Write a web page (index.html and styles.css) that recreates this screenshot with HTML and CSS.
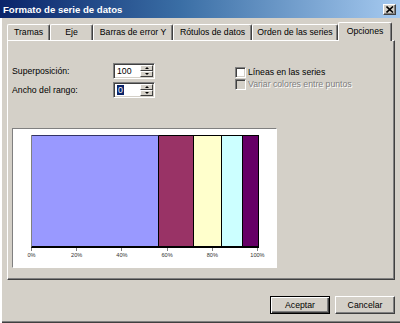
FILE: index.html
```html
<!DOCTYPE html>
<html lang="es">
<head>
<meta charset="utf-8">
<title>Formato de serie de datos</title>
<link rel="stylesheet" href="styles.css">
</head>
<body>
<div class="window">
  <div class="titlebar">
    <span class="title">Formato de serie de datos</span>
    <span class="close"><svg width="8" height="7" viewBox="0 0 8 7"><path d="M0.5 0.5 L7 6.5 M7 0.5 L0.5 6.5" stroke="#000" stroke-width="1.6" fill="none"/></svg></span>
  </div>
  <div class="body">
    <div class="tabs">
      <div class="tab w-tramas">Tramas</div>
      <div class="tab w-eje">Eje</div>
      <div class="tab w-barras">Barras de error Y</div>
      <div class="tab w-rotulos">Rótulos de datos</div>
      <div class="tab w-orden">Orden de las series</div>
      <div class="tab active w-opciones">Opciones</div>
    </div>
    <div class="panel">
      <div class="options">
        <div class="fields">
          <label class="lbl">Superposición:</label>
          <div class="spin">
            <span class="val">100</span>
            <span class="arrows"><span class="arrow up"></span><span class="arrow down"></span></span>
          </div>
          <label class="lbl">Ancho del rango:</label>
          <div class="spin">
            <span class="val"><span class="sel">0</span></span>
            <span class="arrows"><span class="arrow up"></span><span class="arrow down"></span></span>
          </div>
        </div>
        <div class="checks">
          <div class="check"><span class="cb"></span><span>Líneas en las series</span></div>
          <div class="check disabled"><span class="cb"></span><span>Variar colores entre puntos</span></div>
        </div>
      </div>
      <div class="chart">
        <div class="plot">
          <div class="bar c1" style="flex-basis:55.9%"></div>
          <div class="bar c2" style="flex-basis:15.4%"></div>
          <div class="bar c3" style="flex-basis:12.3%"></div>
          <div class="bar c4" style="flex-basis:9.3%"></div>
          <div class="bar c5" style="flex-basis:7.1%"></div>
        </div>
        <div class="axis">
          <span class="tick"><span>0%</span></span>
          <span class="tick"><span>20%</span></span>
          <span class="tick"><span>40%</span></span>
          <span class="tick"><span>60%</span></span>
          <span class="tick"><span>80%</span></span>
          <span class="tick"><span>100%</span></span>
        </div>
      </div>
    </div>
    <div class="buttons">
      <button class="btn default">Aceptar</button>
      <button class="btn">Cancelar</button>
    </div>
  </div>
</div>
</body>
</html>
```
FILE: styles.css
```css
* { box-sizing: border-box; }
html, body { margin: 0; padding: 0; }
body {
  width: 400px;
  height: 323px;
  overflow: hidden;
  font-family: "Liberation Sans", Arial, sans-serif;
  font-size: 8.7px;
  color: #000;
  background: #d4d0c8;
}
.window {
  width: 400px;
  height: 323px;
  background: #d4d0c8;
  display: flex;
  flex-direction: column;
  box-shadow: inset 2px 0 #fff, inset 1px 0 #d4d0c8, inset 0 -1px #404040, inset 0 -2px #808080;
}
.titlebar {
  height: 18px;
  flex: none;
  background: linear-gradient(to right, #0a246a 0%, #3a6ea5 45%, #a6caf0 100%);
  display: flex;
  align-items: center;
  justify-content: space-between;
  padding: 0 4px 0 3px;
  color: #fff;
  font-weight: bold;
  font-size: 9.6px;
}
.close {
  width: 13px;
  height: 11px;
  margin-top: 1px;
  background: #d4d0c8;
  border: 1px solid;
  border-color: #fff #404040 #404040 #fff;
  box-shadow: inset -1px -1px #808080;
  display: flex;
  align-items: center;
  justify-content: center;
}
.close svg { display: block; }
.body {
  flex: 1;
  display: flex;
  flex-direction: column;
  padding: 4px 5px 0 7px;
}
.tabs {
  display: flex;
  align-items: flex-end;
  height: 18px;
  position: relative;
  z-index: 1;
}
.tab {
  height: 16px;
  border-top: 1px solid #fff;
  border-left: 1px solid #fff;
  border-right: 1px solid #404040;
  box-shadow: inset -1px 0 #808080;
  border-radius: 2px 2px 0 0;
  text-align: center;
  line-height: 15px;
  white-space: nowrap;
  background: #d4d0c8;
}
.tab.active {
  height: 19px;
  margin-bottom: -1px;
  line-height: 16px;
}
.w-tramas { width: 43px; }
.w-eje { width: 43px; }
.w-barras { width: 80px; }
.w-rotulos { width: 79px; }
.w-orden { width: 86px; }
.w-opciones { width: 54px; }
.panel {
  height: 240px;
  flex: none;
  border-top: 1px solid #fff;
  border-left: 1px solid #fff;
  border-right: 1px solid #404040;
  border-bottom: 1px solid #404040;
  box-shadow: inset -1px -1px #808080;
  padding: 22px 0 0 4px;
}
.options { display: flex; }
.fields {
  display: grid;
  grid-template-columns: 101px 42px;
  row-gap: 3px;
  align-items: center;
}
.lbl { line-height: 16px; }
.spin {
  width: 42px;
  height: 16px;
  display: flex;
  background: #fff;
  border: 1px solid;
  border-color: #808080 #fff #fff #808080;
  box-shadow: inset 1px 1px #404040, inset -1px -1px #d4d0c8;
  padding: 1px 1px 1px 1px;
}
.val {
  flex: 1;
  padding-left: 2px;
  line-height: 12px;
  font-size: 8.7px;
}
.sel {
  background: #0a246a;
  color: #fff;
  padding: 0 1px;
}
.arrows {
  width: 13px;
  display: flex;
  flex-direction: column;
}
.arrow {
  flex: 1;
  background: #d4d0c8;
  border: 1px solid;
  border-color: #fff #404040 #404040 #fff;
  display: flex;
  align-items: center;
  justify-content: center;
}
.arrow::after {
  content: "";
  width: 0;
  height: 0;
  border-left: 2.5px solid transparent;
  border-right: 2.5px solid transparent;
}
.arrow.up::after { border-bottom: 2px solid #000; }
.arrow.down::after { border-top: 2px solid #000; }
.checks {
  margin-left: 80px;
  margin-top: 4px;
  display: flex;
  flex-direction: column;
  gap: 1px;
}
.check {
  display: flex;
  align-items: center;
  gap: 2px;
  height: 11px;
  line-height: 11px;
  white-space: nowrap;
}
.cb {
  width: 11px;
  height: 11px;
  flex: none;
  background: #fff;
  border: 1px solid;
  border-color: #808080 #fff #fff #808080;
  box-shadow: inset 1px 1px #404040, inset -1px -1px #d4d0c8;
}
.check.disabled { color: #808080; text-shadow: 1px 1px #fff; }
.check.disabled .cb { background: #d4d0c8; }
.chart {
  margin-top: 30px;
  width: 265px;
  height: 140px;
  background: #fff;
  border: 1px solid;
  border-color: #808080 #fff #fff #808080;
  padding: 6px 0 0 18px;
}
.plot {
  width: 228px;
  height: 113px;
  display: flex;
  border-bottom: 2px solid #000;
  border-left: 1px solid #808080;
}
.bar {
  flex-grow: 0;
  flex-shrink: 0;
  border-top: 1px solid #000;
  border-right: 1px solid #000;
}
.c1 { background: #9999ff; border-top-color: #333366; }
.c2 { background: #993366; }
.c3 { background: #ffffcc; }
.c4 { background: #ccffff; }
.c5 { background: #660066; }
.axis {
  width: 227px;
  height: 12px;
  display: flex;
  justify-content: space-between;
}
.tick {
  width: 1px;
  height: 3px;
  background: #808080;
  position: relative;
  display: flex;
  justify-content: center;
}
.tick span {
  margin-top: 4px;
  font-size: 5.6px;
  line-height: 7px;
  color: #333;
  white-space: nowrap;
}
.buttons {
  display: flex;
  justify-content: flex-end;
  gap: 5px;
  margin-top: 16px;
}
.btn {
  width: 60px;
  height: 18px;
  padding: 0;
  background: #d4d0c8;
  border: 1px solid;
  border-color: #fff #404040 #404040 #fff;
  box-shadow: inset -1px -1px #808080;
  font-family: "Liberation Sans", Arial, sans-serif;
  font-size: 8.7px;
  color: #000;
}
.btn.default {
  border-color: #000;
  box-shadow: inset 1px 1px #fff, inset -1px -1px #404040, inset -2px -2px #808080;
}
```
